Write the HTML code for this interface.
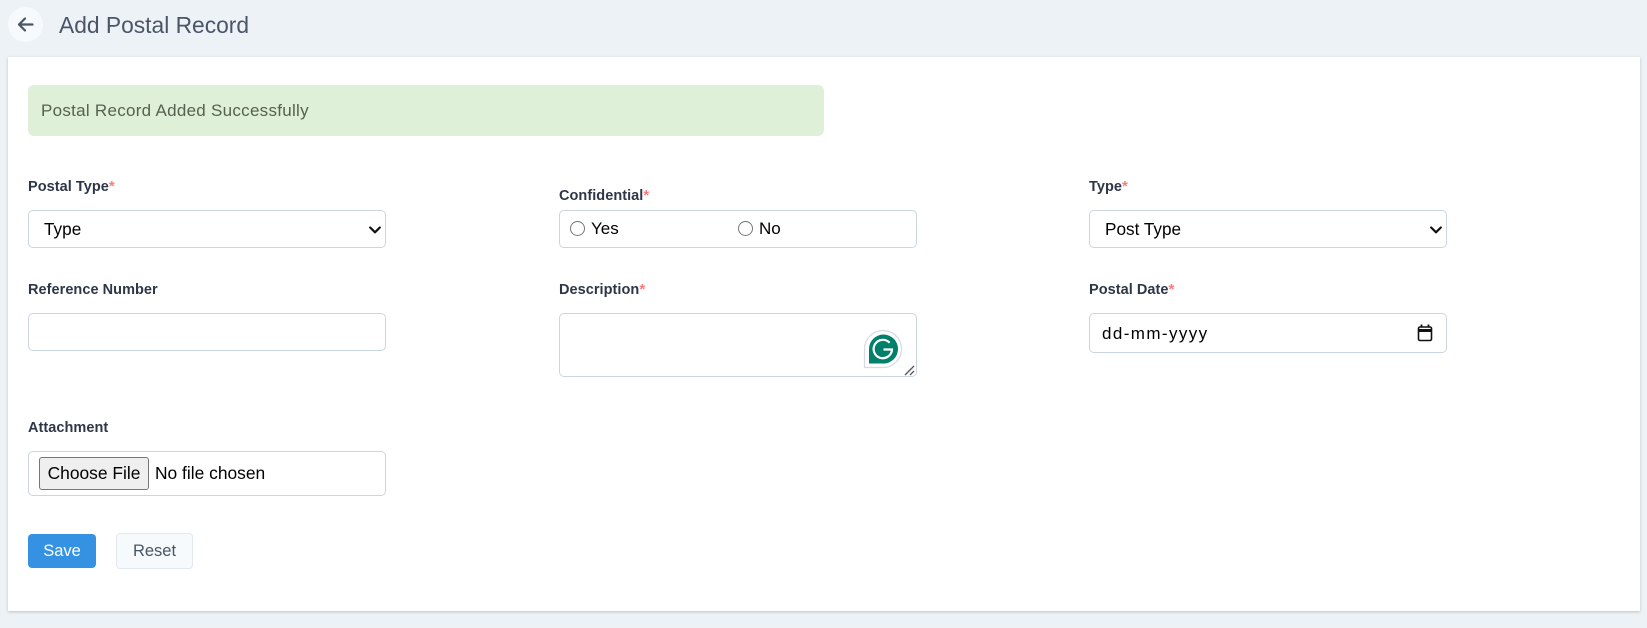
<!DOCTYPE html>
<html lang="en"><head><meta charset="utf-8"><title>Add Postal Record</title>
<style>
html,body{margin:0;padding:0;width:1647px;height:628px;overflow:hidden;background:#edf2f7;font-family:"Liberation Sans",sans-serif;}
.a{position:absolute;white-space:nowrap;}
.back{left:8px;top:7px;width:35px;height:35px;border-radius:50%;background:#f7fafc;}
h1{margin:0;font-weight:400;font-size:22.8px;line-height:30px;color:#4a5568;left:59px;top:10px;}
.card{left:8px;top:57px;width:1632px;height:554px;background:#fff;box-shadow:0 1px 3px rgba(0,0,0,.2);}
.alert{left:28px;top:85px;width:796px;height:51px;border-radius:6px;background:#dff0d8;color:#56614f;font-size:17px;line-height:51px;text-indent:13px;letter-spacing:.28px;}
label.l{font-size:14.5px;font-weight:700;color:#2d3748;line-height:18px;letter-spacing:.05px;margin-top:1px;}
label.l i{font-style:normal;color:#fc7a7a;font-weight:700;font-size:15px;line-height:0;}
.f{box-sizing:border-box;border:1px solid #cbd5e0;border-radius:5px;background:#fff;margin:0;outline:0;color:#000;}
select.f{appearance:none;-webkit-appearance:none;font:17.2px "Liberation Sans",sans-serif;padding:0 0 0 15px;width:358px;height:38px;}
input[type=radio]{margin:0;width:15px;height:15px;}
.t{font-size:17px;color:#000;line-height:22px;}
textarea.f{display:block;resize:none;padding:0;}
input[type=file]{font:17.4px "Liberation Sans",sans-serif;width:330px;height:33px;}
input[type=file]::file-selector-button{width:110px;height:33px;margin:0 6px 0 0;padding:0;border:1px solid #767676;border-radius:3px;background:#efefef;color:#000;font:17.4px "Liberation Sans",sans-serif;}
.btn{box-sizing:border-box;text-align:center;font-size:16.5px;border-radius:4px;}
</style></head><body>
<div class="a back"></div>
<svg class="a" style="left:16px;top:15px" width="19" height="19" viewBox="0 0 19 19" fill="none" stroke="#4a5568" stroke-width="2.2" stroke-linecap="round" stroke-linejoin="round"><path d="M16.500 9.500H3M9 3.500L3 9.500L9 15.500"/></svg>
<h1 class="a">Add Postal Record</h1>
<div class="a card"></div>
<div class="a alert">Postal Record Added Successfully</div>

<label class="a l" style="left:28px;top:177px">Postal Type<i>*</i></label>
<select class="a f" style="left:28px;top:210px"><option>Type</option></select>
<svg class="a" style="left:369px;top:226px" width="12" height="8" viewBox="0 0 12 8" fill="none" stroke="#111" stroke-width="2.200" stroke-linecap="round" stroke-linejoin="round"><path d="M1.200 1.500L6 6.300L10.800 1.500"/></svg>

<label class="a l" style="left:559px;top:186px">Confidential<i>*</i></label>
<div class="a f" style="left:559px;top:210px;width:358px;height:38px"></div>
<input class="a" type="radio" style="left:570px;top:221px">
<span class="a t" style="left:591px;top:218px">Yes</span>
<input class="a" type="radio" style="left:738px;top:221px">
<span class="a t" style="left:759px;top:218px">No</span>

<label class="a l" style="left:1089px;top:177px">Type<i>*</i></label>
<select class="a f" style="left:1089px;top:210px"><option>Post Type</option></select>
<svg class="a" style="left:1430px;top:226px" width="12" height="8" viewBox="0 0 12 8" fill="none" stroke="#111" stroke-width="2.200" stroke-linecap="round" stroke-linejoin="round"><path d="M1.200 1.500L6 6.300L10.800 1.500"/></svg>

<label class="a l" style="left:28px;top:280px">Reference Number</label>
<input class="a f" type="text" style="left:28px;top:313px;width:358px;height:38px">

<label class="a l" style="left:559px;top:280px">Description<i>*</i></label>
<textarea class="a f" style="left:559px;top:313px;width:358px;height:64px"></textarea>
<svg class="a" style="left:904px;top:365px" width="11" height="11" viewBox="0 0 11 11" fill="none" stroke="#555" stroke-width="1.300"><path d="M1 10L10 1M6 10L10 6"/></svg>
<svg class="a" style="left:863px;top:329px" width="40" height="40" viewBox="0 0 40 40">
<path d="M1.500 39V20A18.500 18.500 0 1 1 20 38.500H1.500Z" fill="#fff" stroke="#d5dae6" stroke-width="1.200"/>
<path d="M6 34.500V20A14.500 14.500 0 1 1 20 34.500Z" fill="#00806a"/>
<path d="M26.600 13.800A9.200 9.200 0 1 0 29 20.500H20.500" fill="none" stroke="#fff" stroke-width="2.200"/>
</svg>

<label class="a l" style="left:1089px;top:280px">Postal Date<i>*</i></label>
<div class="a f" style="left:1089px;top:313px;width:358px;height:40px"></div>
<span class="a" style="left:1102px;top:323px;font-size:17px;line-height:22px;letter-spacing:1.4px;color:#000">dd-mm-yyyy</span>
<svg class="a" style="left:1417px;top:324px" width="16" height="18" viewBox="0 0 16 18" fill="none" stroke="#111"><rect x="1.500" y="3" width="13" height="13.500" rx="1.500" stroke-width="1.600"/><path d="M1.500 6.500H14.500" stroke-width="3"/><path d="M4.500 .5V3M11.500 .5V3" stroke-width="1.800"/></svg>

<label class="a l" style="left:28px;top:418px">Attachment</label>
<div class="a f" style="left:28px;top:451px;width:358px;height:45px"></div>
<input class="a" type="file" style="left:39px;top:457px">

<div class="a btn" style="left:28px;top:534px;width:68px;height:34px;background:#3592e3;color:#fff;line-height:34px">Save</div>
<div class="a btn" style="left:116px;top:533px;width:77px;height:36px;background:#f7fafc;border:1px solid #e2e8f0;color:#4a5568;line-height:34px">Reset</div>
</body></html>
